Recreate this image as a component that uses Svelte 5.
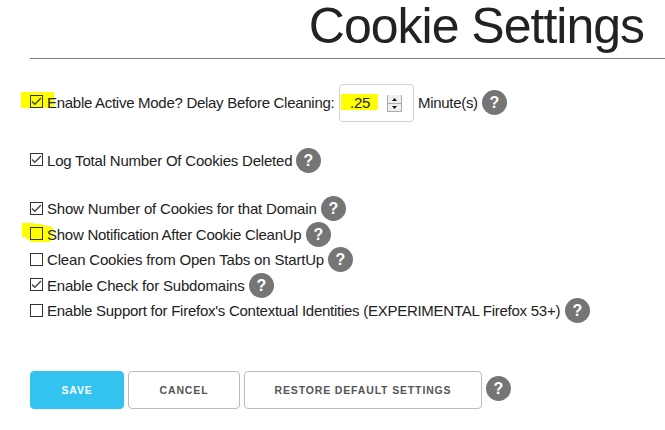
<script>
  const groups = [
    [{ label: 'Enable Active Mode? Delay Before Cleaning:', checked: true, mark: 'bar', delay: '.25', width: 288, tracking: -0.285 }],
    [{ label: 'Log Total Number Of Cookies Deleted', checked: true, width: 245, tracking: -0.2 }],
    [
      { label: 'Show Number of Cookies for that Domain', checked: true, width: 270, tracking: -0.19 },
      { label: 'Show Notification After Cookie CleanUp', mark: 'brush', width: 255, tracking: -0.26 },
      { label: 'Clean Cookies from Open Tabs on StartUp', width: 277, tracking: -0.18 },
      { label: 'Enable Check for Subdomains', checked: true, width: 198, tracking: -0.19 },
      { label: "Enable Support for Firefox's Contextual Identities (EXPERIMENTAL Firefox 53+)", width: 514, tracking: -0.265 }
    ]
  ];
</script>

{#snippet help()}
  <span class="help">?</span>
{/snippet}

<main>
  <h1>Cookie Settings</h1>
  {#each groups as group, g}
    <section class="group g{g}">
      {#each group as item}
        <div class="row">
          {#if item.mark === 'bar'}
            <svg class="mark bar" width="33" height="16"><path d="M0 0H33V16H0Z" fill="#ff0" /></svg>
          {:else if item.mark === 'brush'}
            <svg class="mark brush" width="31" height="20"><path d="M0 0H11L13 1H21L22 3H27L31 5V15L28 19H8V17L4 16V14H0Z" fill="#ff0" /></svg>
          {/if}
          <svg class="box" width="13" height="13" viewBox="0 0 13 13">
            <rect x=".5" y=".5" width="12" height="12" fill={item.mark ? 'none' : '#fff'} stroke="#333" />
            {#if item.checked}<path d="M2 6.4L4.8 9.2L11 3" fill="none" stroke="#444" stroke-width="1.4" />{/if}
          </svg>
          <span class="label" style="width:{item.width}px;letter-spacing:{item.tracking}px">{item.label}</span>
          {#if item.delay}
            <span class="field">
              <span class="value">{item.delay}</span>
              <svg class="spin" width="15" height="17" viewBox="0 0 15 17">
                <path d="M.5 0V16.5H14.5V0M0 8.5H15" fill="#eee" stroke="#aaa" />
                <path d="M7.5 3L10 6H5ZM7.5 14L10 11H5Z" fill="#111" />
              </svg>
            </span>
            <span class="unit">Minute(s)</span>
          {/if}
          {@render help()}
        </div>
      {/each}
    </section>
  {/each}
  <footer>
    <button class="save">Save</button>
    <button class="cancel">Cancel</button>
    <button class="restore">Restore Default Settings</button>
    {@render help()}
  </footer>
</main>

<style>
  :global(body) { background: #fff; overflow: hidden; }
  main {
    box-sizing: border-box;
    width: 665px;
    height: 430px;
    padding-left: 30px;
    font: 15px/25px "Liberation Sans", Arial, sans-serif;
    color: #222;
  }
  h1 {
    box-sizing: border-box;
    height: 59px;
    margin: 0;
    padding-right: 21px;
    border-bottom: 1px solid #808080;
    font-size: 50px;
    font-weight: 400;
    line-height: 52px;
    letter-spacing: -1px;
    text-align: right;
  }
  .g0 { padding-top: 25px; }
  .g0 .row { height: 38px; }
  .g1 { padding-top: 26px; }
  .g2 { padding-top: 23px; }
  .row { position: relative; display: flex; align-items: center; height: 25.5px; }
  .g1 .row { height: 25px; }
  .mark { position: absolute; left: -9px; top: 8px; }
  .brush { left: -8px; top: 1px; }
  .box { position: relative; flex: none; margin: -1px 4px 0 0; }
  .g0 .box { margin-top: -3px; }
  .g1 .box { margin-top: -2px; }
  .label { position: relative; flex: none; white-space: nowrap; }
  .g0 .label, .g0 .unit, .g0 .help { margin-top: -2px; }
  .field {
    box-sizing: border-box;
    display: flex;
    align-items: center;
    width: 75px;
    height: 38px;
    margin: 0 4px;
    border: 1px solid #d1d1d1;
    border-radius: 4px;
    padding-left: 1px;
  }
  .value {
    box-sizing: border-box;
    width: 37px;
    height: 16px;
    margin-top: -3px;
    padding-left: 9px;
    background: #ff0;
    line-height: 18px;
    letter-spacing: -.2px;
  }
  .spin { margin-left: 9px; }
  .unit { width: 60px; letter-spacing: -.3px; }
  .help {
    flex: none;
    width: 25px;
    height: 25px;
    margin-left: 4px;
    border-radius: 50%;
    background: #757575;
    color: #fff;
    font-size: 16px;
    font-weight: 700;
    line-height: 25px;
    text-align: center;
  }
  footer { display: flex; gap: 4px; margin-top: 47.5px; }
  button {
    box-sizing: border-box;
    height: 38px;
    padding: 0;
    border: 1px solid #bbb;
    border-radius: 4px;
    background: #fff;
    color: #555;
    font: 700 10.5px/36px "Liberation Sans", Arial, sans-serif;
    letter-spacing: .85px;
    text-transform: uppercase;
  }
  .save { width: 94px; border-color: #33c3f0; background: #33c3f0; color: #fff; }
  .cancel { width: 112px; }
  .restore { width: 238px; }
  footer .help { margin: 5px 0 0; }
</style>
